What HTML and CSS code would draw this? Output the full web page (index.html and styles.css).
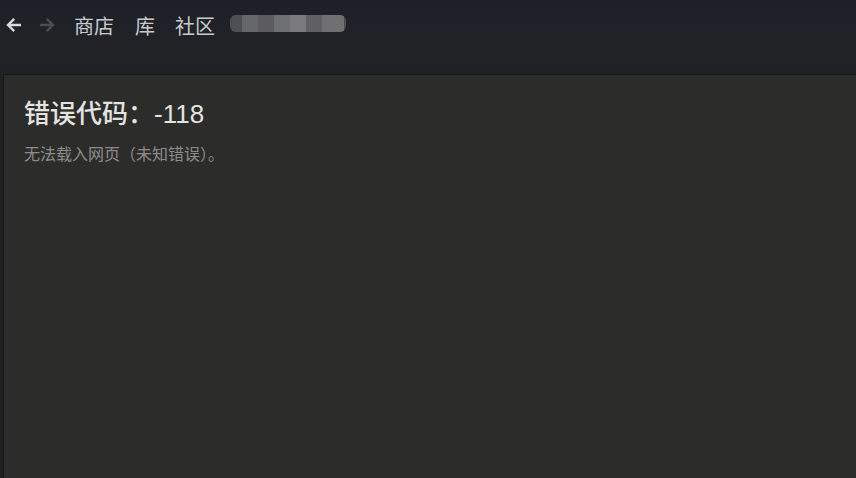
FILE: index.html
```html
<!DOCTYPE html>
<html lang="zh-CN">
<head>
    <meta charset="UTF-8">
    <title>错误代码：-118</title>
    <link rel="stylesheet" href="styles.css">
</head>
<body>
    <div class="topbar">
        <div class="nav-arrows">
            <svg class="arrow" width="16" height="16" viewBox="0 0 16 16">
                <path d="M15 8H2M8.2 1.8L2 8L8.2 14.2" stroke="currentColor" stroke-width="2.4" fill="none"/>
            </svg>
            <svg class="arrow dim" width="16" height="16" viewBox="0 0 16 16">
                <path d="M1 8H14M7.8 1.8L14 8L7.8 14.2" stroke="currentColor" stroke-width="2.4" fill="none"/>
            </svg>
        </div>
        <a class="tab">商店</a>
        <a class="tab">库</a>
        <a class="tab">社区</a>
        <div class="user-blur">
            <span></span><span></span><span></span><span></span><span></span><span></span><span></span>
        </div>
    </div>

    <div class="page">
        <h1 class="err-title">错误代码：-118</h1>
        <p class="err-desc">无法载入网页（未知错误）。</p>
    </div>
</body>
</html>
```

FILE: styles.css
```css
html, body {
    height: 100%;
}

body {
    margin: 0;
    display: flex;
    flex-direction: column;
    background-color: #202123;
    font-family: "Noto Sans CJK SC", "Liberation Sans", sans-serif;
    overflow: hidden;
}

.topbar {
    height: 74px;
    flex-shrink: 0;
    display: flex;
    align-items: flex-start;
    padding: 14px 0 0 6px;
    box-sizing: border-box;
    background: linear-gradient(180deg, #1d2029 0%, #202226 45%, #202123 100%);
}

.nav-arrows {
    display: flex;
    gap: 17px;
    padding-top: 3px;
    margin-right: 19px;
}

.arrow {
    color: #d8d9db;
}

.arrow.dim {
    color: #4b4d51;
}

.tab {
    font-size: 20px;
    line-height: 24px;
    color: #c8cacd;
    margin-right: 21px;
    cursor: pointer;
}

.tab:nth-of-type(2) {
    margin-right: 20px;
}

.tab:last-of-type {
    margin-right: 15px;
}

.user-blur {
    display: flex;
    height: 17px;
    margin-top: 1px;
    padding: 0 2px;
    border-radius: 6px;
    overflow: hidden;
    filter: blur(0.6px);
    background-color: #4c4d52;
}

.user-blur span {
    width: 16px;
    background-color: #5f6064;
}

.user-blur span:nth-child(1) { background-color: #4e4f53; width: 10px; }
.user-blur span:nth-child(2) { background-color: #66676a; }
.user-blur span:nth-child(3) { background-color: #5c5c5f; }
.user-blur span:nth-child(4) { background-color: #6e6f72; }
.user-blur span:nth-child(5) { background-color: #7a7a7c; }
.user-blur span:nth-child(6) { background-color: #616164; }
.user-blur span:nth-child(7) { background-color: #707073; width: 22px; }

.page {
    flex: 1;
    margin-left: 3px;
    border-top: 1px solid #151618;
    border-left: 1px solid #18191b;
    background-color: #2c2c2a;
    padding: 21px 20px;
}

.err-title {
    margin: 0;
    font-family: "Liberation Sans", "Noto Sans CJK SC", sans-serif;
    font-size: 26px;
    font-weight: 500;
    line-height: 36px;
    color: #e3e3e3;
}

.err-desc {
    margin: 11px 0 0;
    font-size: 16px;
    line-height: 20px;
    color: #8c8c8c;
}
```
